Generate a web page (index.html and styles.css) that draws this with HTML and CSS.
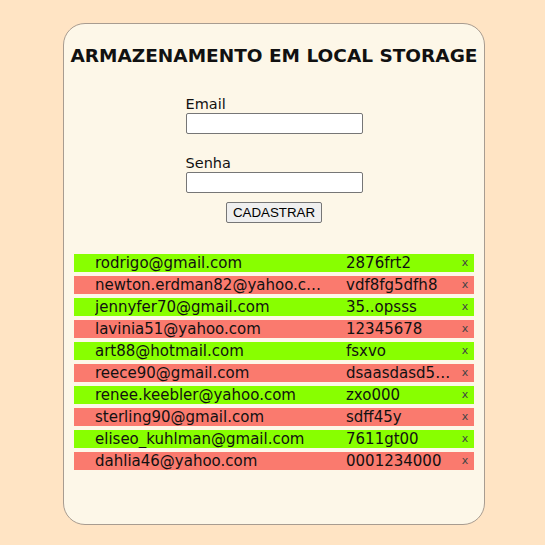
FILE: index.html
```html
<!DOCTYPE html>
<html lang="pt">
<head>
<meta charset="utf-8">
<title>Local Storage</title>
<link rel="stylesheet" href="styles.css">
</head>
<body>
<div class="card">
  <h1 class="title">ARMAZENAMENTO EM LOCAL STORAGE</h1>
  <form class="form">
    <div class="field">
      <label class="label" for="email">Email</label>
      <input class="input" id="email" type="text">
    </div>
    <div class="field">
      <label class="label" for="senha">Senha</label>
      <input class="input" id="senha" type="password">
    </div>
    <button class="btn" type="button">CADASTRAR</button>
  </form>
  <div class="list">
    <div class="row green"><span class="email">rodrigo@gmail.com</span><span class="pass">2876frt2</span><span class="del">x</span></div>
    <div class="row red"><span class="email">newton.erdman82@yahoo.com</span><span class="pass">vdf8fg5dfh8</span><span class="del">x</span></div>
    <div class="row green"><span class="email">jennyfer70@gmail.com</span><span class="pass">35..opsss</span><span class="del">x</span></div>
    <div class="row red"><span class="email">lavinia51@yahoo.com</span><span class="pass">12345678</span><span class="del">x</span></div>
    <div class="row green"><span class="email">art88@hotmail.com</span><span class="pass">fsxvo</span><span class="del">x</span></div>
    <div class="row red"><span class="email">reece90@gmail.com</span><span class="pass">dsaasdasd58787</span><span class="del">x</span></div>
    <div class="row green"><span class="email">renee.keebler@yahoo.com</span><span class="pass">zxo000</span><span class="del">x</span></div>
    <div class="row red"><span class="email">sterling90@gmail.com</span><span class="pass">sdff45y</span><span class="del">x</span></div>
    <div class="row green"><span class="email">eliseo_kuhlman@gmail.com</span><span class="pass">7611gt00</span><span class="del">x</span></div>
    <div class="row red"><span class="email">dahlia46@yahoo.com</span><span class="pass">0001234000</span><span class="del">x</span></div>
  </div>
</div>
</body>
</html>
```
FILE: styles.css
```css
html, body {
  margin: 0;
  padding: 0;
}
body {
  background: #ffe4c4;
  font-family: "DejaVu Sans", Verdana, sans-serif;
  color: #111;
  padding-top: 23px;
}
.card {
  box-sizing: border-box;
  width: 422px;
  height: 502px;
  margin: 0 0 0 63px;
  background: #fdf7e8;
  border: 1px solid #a89c90;
  border-radius: 22px;
  padding: 20px 10px;
}
.title {
  margin: 0 -10px;
  font-size: 18.5px;
  font-weight: bold;
  text-align: center;
  line-height: 24px;
  white-space: nowrap;
}
.form {
  display: flex;
  flex-direction: column;
  align-items: center;
  margin-top: 28px;
}
.field {
  display: flex;
  flex-direction: column;
  width: 177px;
  margin-bottom: 21px;
}
.label {
  font-size: 14.5px;
  line-height: 16px;
  margin-bottom: 1px;
}
.input {
  box-sizing: border-box;
  width: 177px;
  height: 21px;
  margin: 0;
  border: 1px solid #767676;
  border-radius: 2px;
  background: #fff;
}
.btn {
  margin-top: -12px;
  font-family: "Liberation Sans", Arial, sans-serif;
  font-size: 13.33px;
  height: 21px;
  padding: 1px 6px;
  border: 1px solid #767676;
  border-radius: 2px;
  background: #efefef;
  color: #000;
}
.list {
  display: flex;
  flex-direction: column;
  gap: 4px;
  margin-top: 31px;
}
.row {
  display: flex;
  align-items: center;
  height: 18px;
  padding-left: 21px;
  font-size: 15px;
  line-height: 18px;
}
.green { background: #88ff00; }
.red { background: #fa7a6e; }
.email, .pass {
  white-space: nowrap;
  overflow: hidden;
  text-overflow: ellipsis;
}
.email { width: 232px; margin-right: 19px; }
.pass { width: 113px; }
.del {
  width: 12px;
  text-align: center;
  font-size: 11px;
  color: #444;
}
```
